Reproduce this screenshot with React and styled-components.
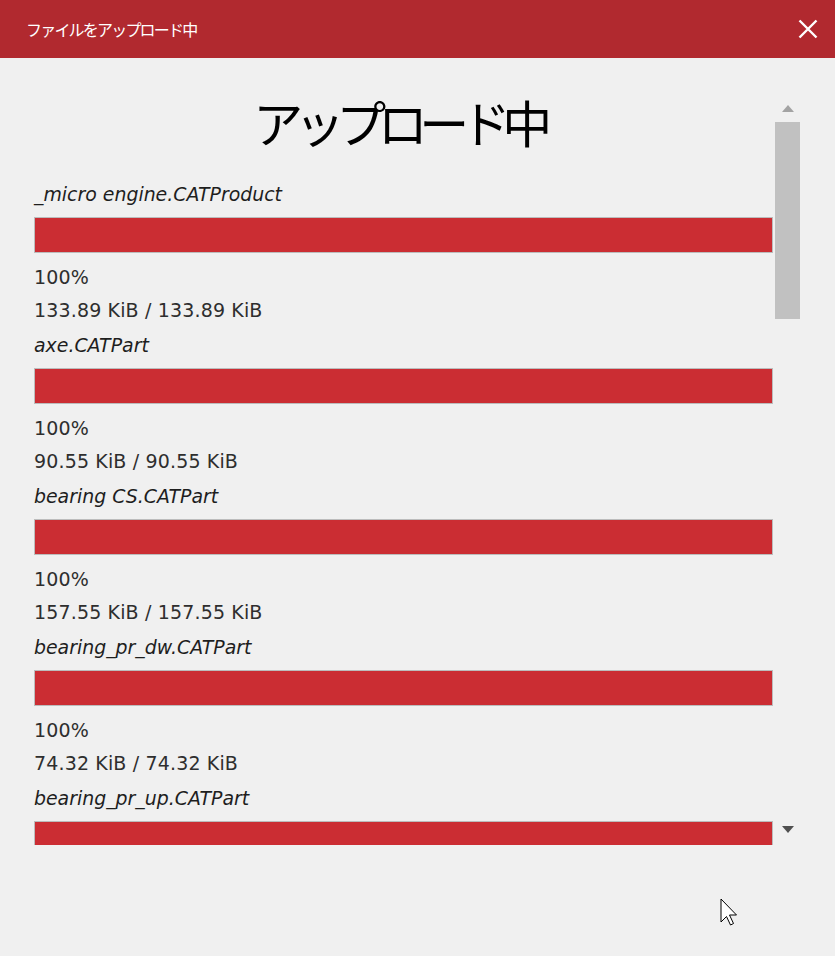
import React from "react";
import styled, { createGlobalStyle } from "styled-components";

const Global = createGlobalStyle`
  html, body { margin: 0; padding: 0; background: #f0f0f0; }
  body { font-family: "DejaVu Sans", "Noto Sans CJK JP", sans-serif; }
`;

const Page = styled.div`
  position: relative;
  width: 835px;
  height: 956px;
  background: #f0f0f0;
  overflow: hidden;
`;

const TitleBar = styled.header`
  height: 58px;
  background: #b1292f;
  display: flex;
  align-items: center;
  justify-content: space-between;
  padding: 0 17px 0 26px;
  box-sizing: border-box;
`;

const TitleText = styled.span`
  color: #fff;
  font-family: "Noto Sans CJK JP", sans-serif;
  font-size: 16px;
  letter-spacing: -1.8px;
  line-height: 20px;
`;

const CloseButton = styled.button`
  width: 20px;
  height: 20px;
  padding: 0;
  border: 0;
  background: none;
  display: flex;
  cursor: pointer;
`;

const Body = styled.div`
  display: flex;
  height: 787px;
  padding-left: 34px;
  overflow: hidden;
`;

const Main = styled.main`
  width: 739px;
  flex: none;
  display: flex;
  flex-direction: column;
  padding-top: 28px;
`;

const Heading = styled.h1`
  margin: 0 0 22px;
  padding-right: 10px;
  height: 70px;
  line-height: 70px;
  text-align: center;
  font-family: "Noto Sans CJK JP", sans-serif;
  font-weight: 400;
  font-size: 50px;
  letter-spacing: -8.5px;
  color: #000;
`;

const Item = styled.section`
  display: flex;
  flex-direction: column;
  margin-bottom: 2px;
`;

const FileName = styled.div`
  height: 32px;
  line-height: 32px;
  font-family: "DejaVu Sans", "Noto Sans CJK JP", sans-serif;
  font-style: oblique;
  font-size: 18.9px;
  color: #1e1e1e;
  white-space: nowrap;
`;

const Bar = styled.div`
  margin: 7px 0 8px;
  height: 36px;
  box-sizing: border-box;
  border: 1px solid #bcbcbc;
  background: #e6e6e6;
  flex: none;
`;

const Fill = styled.div`
  height: 100%;
  background: #cb2d33;
`;

const Stat = styled.div`
  height: 33px;
  line-height: 33px;
  font-size: 19px;
  letter-spacing: 0.15px;
  color: #2e2e2e;
  white-space: nowrap;
`;

const Rail = styled.div`
  width: 25px;
  margin-left: 2px;
  flex: none;
  display: flex;
  flex-direction: column;
  align-items: center;
  padding: 47px 0 12px;
  box-sizing: border-box;
`;

const Arrow = styled.div`
  width: 0;
  height: 0;
  border-left: 6.5px solid transparent;
  border-right: 6.5px solid transparent;
  ${(p) =>
    p.$up
      ? `border-bottom: 7px solid ${p.$disabled ? "#a3a3a3" : "#505050"};`
      : `border-top: 7px solid ${p.$disabled ? "#a3a3a3" : "#505050"}; margin-top: auto;`}
`;

const Thumb = styled.div`
  margin-top: 10px;
  width: 25px;
  height: 197px;
  background: #c1c1c1;
`;

const Pointer = styled.svg`
  position: absolute;
  left: 720px;
  top: 898px;
  pointer-events: none;
`;

const files = [
  { name: "_micro engine.CATProduct", size: "133.89 KiB", progress: 100 },
  { name: "axe.CATPart", size: "90.55 KiB", progress: 100 },
  { name: "bearing CS.CATPart", size: "157.55 KiB", progress: 100 },
  { name: "bearing_pr_dw.CATPart", size: "74.32 KiB", progress: 100 },
  { name: "bearing_pr_up.CATPart", size: null, progress: 100 },
];

export default function App() {
  return (
    <Page>
      <Global />
      <TitleBar>
        <TitleText>ファイルをアップロード中</TitleText>
        <CloseButton aria-label="閉じる">
          <svg width="20" height="20" viewBox="0 0 20 20">
            <path d="M1.5 1.5 L18.5 18.5 M18.5 1.5 L1.5 18.5" stroke="#fff" strokeWidth="2.4" fill="none" />
          </svg>
        </CloseButton>
      </TitleBar>
      <Body>
        <Main>
          <Heading>アップロード中</Heading>
          {files.map((f) => (
            <Item key={f.name}>
              <FileName>{f.name}</FileName>
              <Bar>
                <Fill style={{ width: `${f.progress}%` }} />
              </Bar>
              {f.size && (
                <>
                  <Stat>{f.progress}%</Stat>
                  <Stat>
                    {f.size} / {f.size}
                  </Stat>
                </>
              )}
            </Item>
          ))}
        </Main>
        <Rail>
          <Arrow $up $disabled />
          <Thumb />
          <Arrow />
        </Rail>
      </Body>
      <Pointer width="20" height="30" viewBox="0 0 20 30">
        <path
          d="M1 1 L1 24 L6.5 18.5 L10.5 27 L13.5 25.5 L9.5 17 L16.5 17 Z"
          fill="#fff"
          stroke="#000"
          strokeWidth="1"
          strokeLinejoin="miter"
        />
      </Pointer>
    </Page>
  );
}
